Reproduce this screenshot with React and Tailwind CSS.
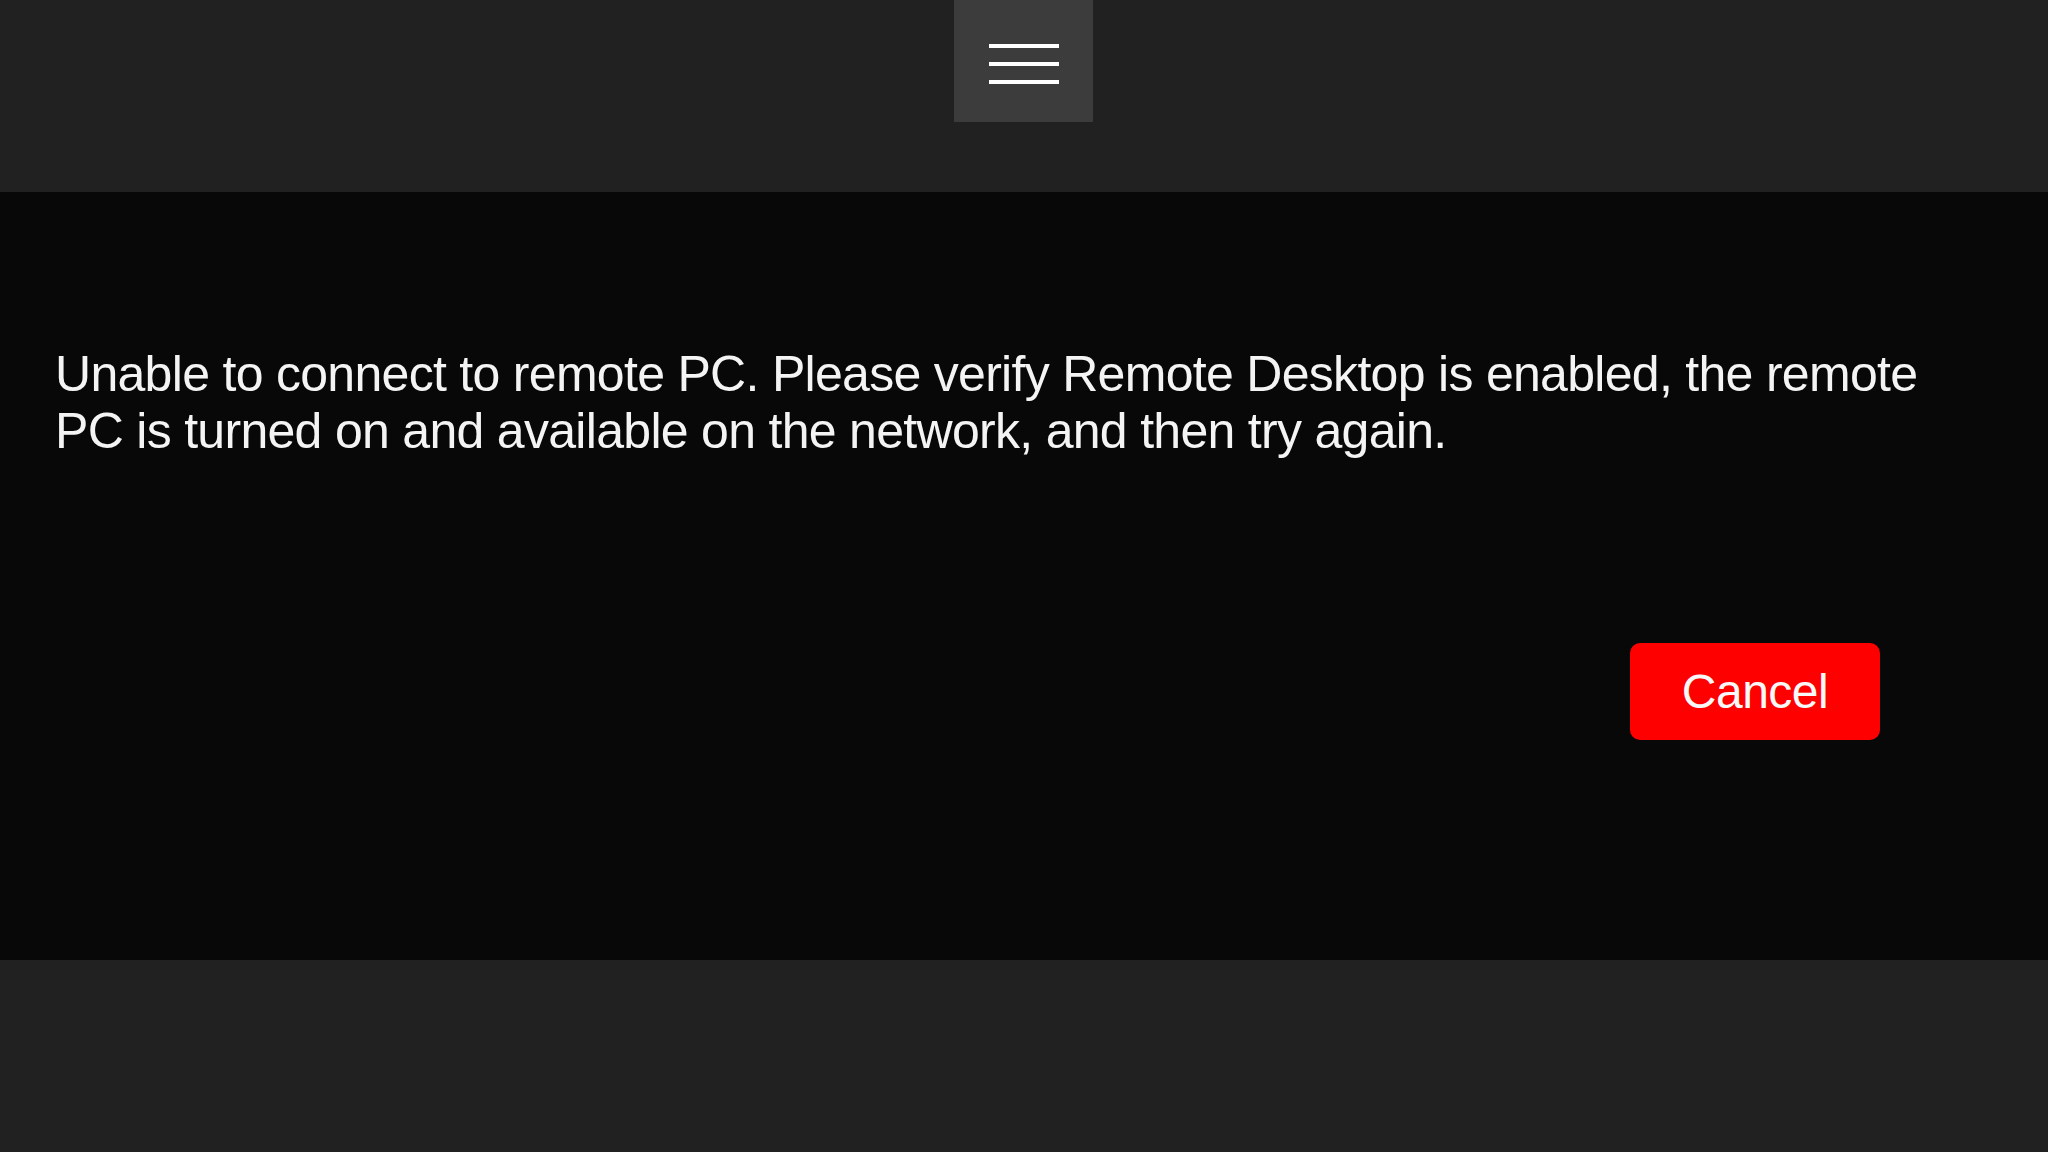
export default function App() {
  return (
    <div
      className="flex flex-col h-[1152px] w-[2048px] bg-[#212121] text-white"
      style={{ fontFamily: '"Liberation Sans", Arial, sans-serif' }}
    >
      <div className="h-[192px] flex justify-center">
        <button className="w-[139px] h-[122px] ml-[-1px] bg-[#3c3c3c] flex flex-col items-center justify-start pt-[44px] gap-[14px]">
          <span className="block w-[70px] h-[4px] bg-white" />
          <span className="block w-[70px] h-[4px] bg-white" />
          <span className="block w-[70px] h-[4px] bg-white" />
        </button>
      </div>

      <div className="h-[768px] bg-[#080808] flex flex-col pt-[154px] pl-[55px] pr-[60px]">
        <p className="text-[50px] leading-[57px] tracking-[-0.7px] text-[#f4f4f4]">
          Unable to connect to remote PC. Please verify Remote Desktop is enabled, the remote
          <br />
          PC is turned on and available on the network, and then try again.
        </p>
        <div className="flex justify-end mt-[183px] pr-[108px]">
          <button className="w-[250px] h-[97px] rounded-[10px] bg-[#fe0000] text-[48px] tracking-[-0.5px] text-[#f8f8f8]">
            Cancel
          </button>
        </div>
      </div>

      <div className="flex-1" />
    </div>
  );
}
